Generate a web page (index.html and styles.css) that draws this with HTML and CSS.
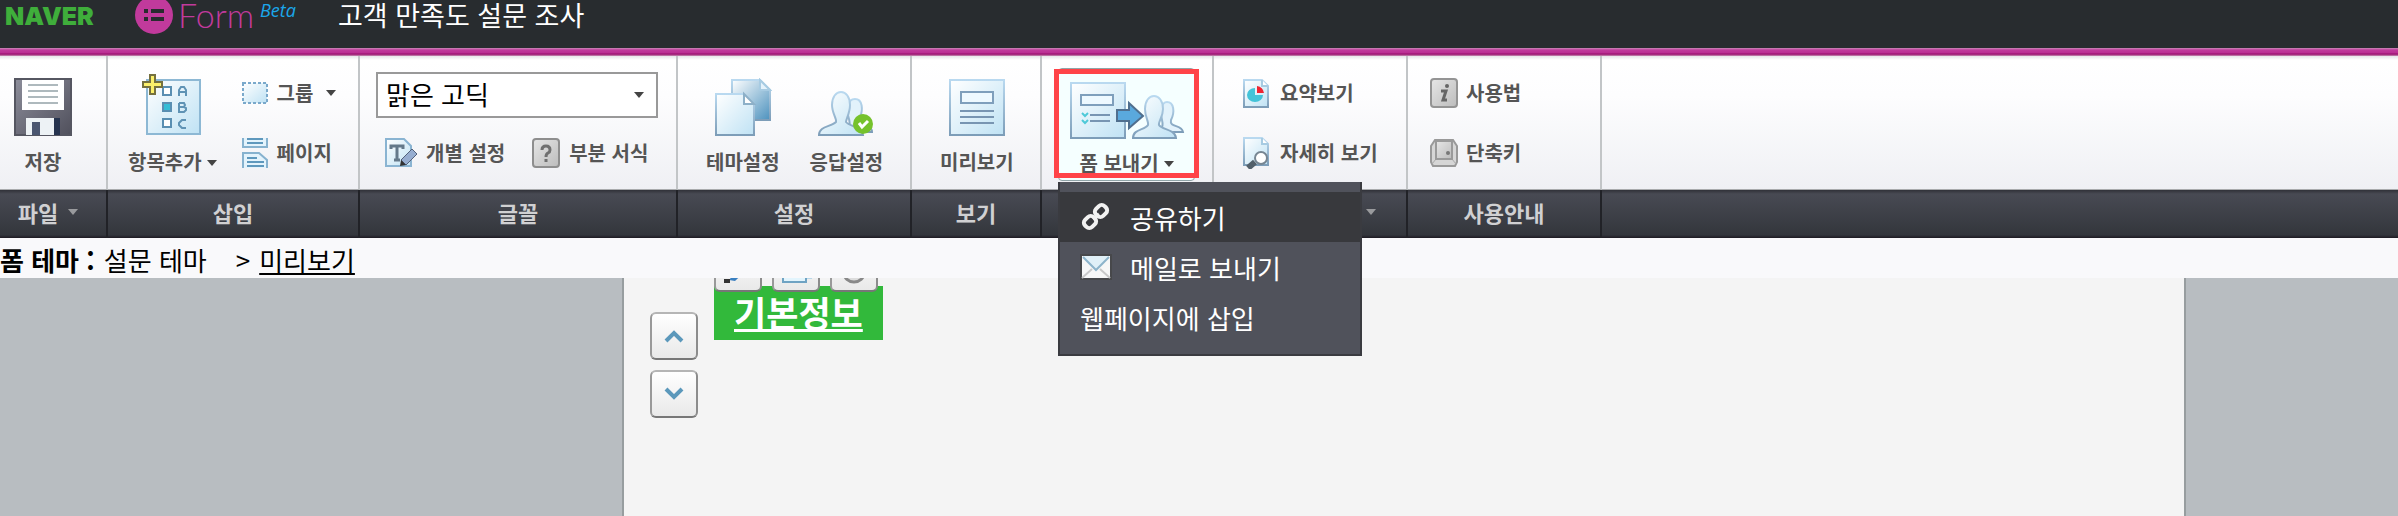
FILE: index.html
```html
<!DOCTYPE html>
<html lang="ko">
<head>
    <meta charset="UTF-8">
    <meta name="viewport" content="width=device-width, initial-scale=1.0">
    <title>고객 만족도 설문 조사</title>
    <link rel="stylesheet" href="styles.css">
</head>
<body>
    <svg class="defs" width="0" height="0">
        <defs>
            <linearGradient id="gSky" x1="0" y1="0" x2="1" y2="1">
                <stop offset="0" stop-color="#ffffff"/>
                <stop offset="1" stop-color="#bfe2f4"/>
            </linearGradient>
            <linearGradient id="gDeep" x1="0" y1="0" x2="1" y2="1">
                <stop offset="0" stop-color="#ffffff"/>
                <stop offset="1" stop-color="#4d92be"/>
            </linearGradient>
            <linearGradient id="gEdge" x1="0" y1="0" x2="0" y2="1">
                <stop offset="0" stop-color="#b9d9f0"/>
                <stop offset="1" stop-color="#7d9db8"/>
            </linearGradient>
            <linearGradient id="gSteel" x1="0" y1="0" x2="1" y2="1">
                <stop offset="0" stop-color="#8d8e9b"/>
                <stop offset="1" stop-color="#50505c"/>
            </linearGradient>
            <linearGradient id="gGray" x1="0" y1="0" x2="1" y2="1">
                <stop offset="0" stop-color="#e6e6e6"/>
                <stop offset="1" stop-color="#bcbcbc"/>
            </linearGradient>
        </defs>
    </svg>

    <header class="header">
        <span class="naver">NAVER</span>
        <svg class="logo" width="40" height="40" viewBox="0 0 40 40">
            <circle cx="20" cy="19" r="19" fill="#c13a9c"/>
            <path d="M10 15h4M10 23h4" stroke="#282c2f" stroke-width="4"/>
            <path d="M17 15h13M17 23h13" stroke="#282c2f" stroke-width="4"/>
        </svg>
        <span class="form">Form</span>
        <span class="beta">Beta</span>
        <h1 class="title">고객 만족도 설문 조사</h1>
    </header>

    <div class="ribbon">
        <section class="group file">
            <div class="tools">
                <button type="button" class="tool">
                    <svg width="58" height="58" viewBox="0 0 58 58">
                        <path d="M1 1h56v56H1z" fill="url(#gSteel)" stroke="#555661" stroke-width="2"/>
                        <path d="M8 2h42v30H8z" fill="#fff"/>
                        <path d="M14 7h30M14 13h30M14 19h30M14 25h30" stroke="#aeb9bd" stroke-width="2"/>
                        <path d="M12 40h28v17H12z" fill="#edf2f5"/>
                        <path d="M18 44h8v13h-8z" fill="#4b5670"/>
                        <path d="M40 40h6v17h-6z" fill="#26344f"/>
                    </svg>
                    <span>저장</span>
                </button>
            </div>
            <button type="button" class="name">파일 <i class="arrow"></i></button>
        </section>

        <section class="group insert">
            <div class="tools">
                <button type="button" class="tool">
                    <svg width="60" height="62" viewBox="0 0 60 62">
                        <path d="M5 6h53v54H5z" fill="url(#gSky)" stroke="#8db8d4" stroke-width="2"/>
                        <path d="M21 13h8v8h-8zM21 45h8v8h-8z" fill="#fff" stroke="#5a8fb2" stroke-width="2"/>
                        <path d="M21 29h8v8h-8z" fill="#35bdd6" stroke="#5a8fb2" stroke-width="2"/>
                        <g fill="none" stroke="#5f93b5" stroke-width="2">
                            <path d="M37 22v-6l2-3h3l2 3v6M37 18h7"/>
                            <path d="M37 29v9h5l2-2v-2l-2-1h-5M37 29h5l1 2-1 2"/>
                            <path d="M44 46h-4l-3 3v2l3 3h4"/>
                        </g>
                        <path d="M8 1h5v7h7v5h-7v7H8v-7H1V8h7z" fill="#fbf06a" stroke="#75713f" stroke-width="2"/>
                    </svg>
                    <span>항목추가<i class="arrow"></i></span>
                </button>
                <div class="stack">
                    <button type="button" class="item">
                        <svg width="28" height="30" viewBox="0 0 28 30">
                            <path d="M2 5h24v20H2z" fill="url(#gSky)" stroke="#7aa9cb" stroke-width="2" stroke-dasharray="3 2"/>
                        </svg>
                        <span>그룹</span><i class="arrow far"></i>
                    </button>
                    <button type="button" class="item">
                        <svg width="28" height="32" viewBox="0 0 28 32">
                            <path d="M2 1v9h24V1M2 31V16h16l8 7v8" fill="#e3f3fc" stroke="#86b2cf" stroke-width="2"/>
                            <path d="M6 2h16M6 6h16M6 21h10M6 25h17M6 29h17" stroke="#5e98bd" stroke-width="2"/>
                        </svg>
                        <span>페이지</span>
                    </button>
                </div>
            </div>
            <div class="name">삽입</div>
        </section>

        <section class="group font">
            <div class="tools">
                <div class="combo">
                    <select class="family" aria-label="글꼴">
                        <option>맑은 고딕</option>
                    </select>
                    <i class="arrow"></i>
                </div>
                <div class="row">
                    <button type="button" class="item">
                        <svg width="34" height="30" viewBox="0 0 34 30">
                            <path d="M2 1h18l7 7v20H2z" fill="url(#gSky)" stroke="#8ab4d2" stroke-width="2"/>
                            <path d="M7 11V8h12v3M13 8v14M10 22h6" fill="none" stroke="#64798a" stroke-width="3"/>
                            <path d="M17 22 28 11l5 5-11 11z" fill="#96add0" stroke="#53617a"/>
                            <path d="m17 22 5 5-6 1z" fill="#333"/>
                        </svg>
                        <span>개별 설정</span>
                    </button>
                    <button type="button" class="item">
                        <svg width="30" height="30" viewBox="0 0 30 30">
                            <rect x="2" y="1" width="26" height="28" rx="3" fill="url(#gGray)" stroke="#8e8e8e" stroke-width="2"/>
                            <path d="M11 12q0-4 4-4t4 4q0 2-2 3t-2 4M15 21v3" fill="none" stroke="#707070" stroke-width="3"/>
                        </svg>
                        <span>부분 서식</span>
                    </button>
                </div>
            </div>
            <div class="name">글꼴</div>
        </section>

        <section class="group setting">
            <div class="tools">
                <button type="button" class="tool">
                    <svg width="58" height="58" viewBox="0 0 58 58">
                        <path d="M18 2h28l10 10v30H18z" fill="url(#gDeep)" stroke="url(#gEdge)" stroke-width="2"/>
                        <path d="M46 2v10h10z" fill="#e4f2fb" stroke="#a7cbe2" stroke-width="2"/>
                        <path d="M2 16h28l10 10v31H2z" fill="url(#gSky)" stroke="url(#gEdge)" stroke-width="2"/>
                        <path d="M30 16v10h10z" fill="#fff" stroke="#8db0c8" stroke-width="2"/>
                    </svg>
                    <span>테마설정</span>
                </button>
                <button type="button" class="tool">
                    <svg width="58" height="58" viewBox="0 0 58 58">
                        <path d="M32 54c2-6 1-8 0-13-3-9-2-20 6-20 8 0 8 11 5 19 0 6 12 6 12 14z" fill="#e2f2fb" stroke="url(#gEdge)" stroke-width="2"/>
                        <path d="M2 57c0-9 12-8 17-13 1-3-4-9-4-17 0-8 4-13 9-13s9 5 9 13c0 8-4 14-4 17 4 5 16 4 17 13z" fill="url(#gSky)" stroke="url(#gEdge)" stroke-width="2"/>
                        <circle cx="46" cy="46" r="10" fill="#76c22c"/>
                        <path d="m42 45 3 4 6-6" fill="none" stroke="#fff" stroke-width="3"/>
                    </svg>
                    <span>응답설정</span>
                </button>
            </div>
            <div class="name">설정</div>
        </section>

        <section class="group view">
            <div class="tools">
                <button type="button" class="tool">
                    <svg width="58" height="58" viewBox="0 0 58 58">
                        <path d="M2 2h54v55H2z" fill="url(#gSky)" stroke="url(#gEdge)" stroke-width="2"/>
                        <path d="M13 14h32v11H13z" fill="#eef9ff" stroke="#7f9fbc" stroke-width="2"/>
                        <path d="M12 33h34M12 39h34M12 45h34" stroke="#7895b2" stroke-width="2"/>
                    </svg>
                    <span>미리보기</span>
                </button>
            </div>
            <div class="name">보기</div>
        </section>

        <section class="group send">
            <div class="tools">
                <button type="button" class="tool active" aria-haspopup="true" aria-expanded="true">
                    <svg width="116" height="58" viewBox="0 0 116 58">
                        <path d="M2 2h54v55H2z" fill="url(#gSky)" stroke="url(#gEdge)" stroke-width="2"/>
                        <path d="M12 14h32v10H12z" fill="#eef9ff" stroke="#7f9fbc" stroke-width="2"/>
                        <path d="M21 34h20M21 40h20" stroke="#7895b2" stroke-width="2"/>
                        <path d="m13 32 3 3 3-3M13 39l3 3 3-3" fill="none" stroke="#4fc9d8" stroke-width="2"/>
                        <path d="M91 51c3-6 3-8 2-12-2-8-1-18 5-18 7 0 8 10 4 18-2 8 11 4 12 12z" fill="#e2f2fb" stroke="url(#gEdge)" stroke-width="2"/>
                        <path d="M64 57c0-9 12-8 15-13 1-3-3-8-3-16 0-8 4-13 9-13s9 5 9 13c0 8-5 13-4 16 3 5 16 4 17 13z" fill="url(#gSky)" stroke="url(#gEdge)" stroke-width="2"/>
                        <path d="M48 29h12v-7l14 13-14 12v-7H48z" fill="#5aa9dd" stroke="#506f8e" stroke-width="2"/>
                    </svg>
                    <span>폼 보내기<i class="arrow"></i></span>
                </button>
                <div class="menu">
                    <button type="button" class="entry selected">
                        <svg width="32" height="32" viewBox="0 0 32 32" fill="none" stroke="#f2f2f2" stroke-width="4">
                            <rect x="-6" y="-5" width="12" height="10" rx="4" transform="translate(10 21) rotate(-45)"/>
                            <rect x="-6" y="-5" width="12" height="10" rx="4" transform="translate(21 10) rotate(-45)"/>
                            <path d="m13 18 6-5" stroke-width="3"/>
                        </svg>
                        공유하기
                    </button>
                    <button type="button" class="entry">
                        <svg width="32" height="32" viewBox="0 0 32 32">
                            <path d="M1 4h30v24H1z" fill="#f7f7f7" stroke="#47484b" stroke-width="2"/>
                            <path d="m2 27 10-9M30 27l-10-9" stroke="#c9c9c9" stroke-width="2"/>
                            <path d="M3 5h26L16 19z" fill="#e0f0f8"/>
                            <path d="m3 6 13 13L29 6" fill="none" stroke="#8db4cb" stroke-width="2"/>
                        </svg>
                        메일로 보내기
                    </button>
                    <button type="button" class="entry">웹페이지에 삽입</button>
                </div>
            </div>
            <div class="name"></div>
        </section>

        <section class="group result">
            <div class="tools">
                <div class="stack">
                    <button type="button" class="item">
                        <svg width="28" height="30" viewBox="0 0 28 30">
                            <path d="M2 2h18l6 6v21H2z" fill="url(#gSky)" stroke="url(#gEdge)" stroke-width="2"/>
                            <path d="M20 2v6h6" fill="#fff" stroke="#a7cbe2" stroke-width="2"/>
                            <path d="M13 10v7h8a8 7 0 1 1-8-7z" fill="#43c3d8"/>
                            <path d="M15 8v7h7q-1-6-7-7z" fill="#ee2431"/>
                        </svg>
                        <span>요약보기</span>
                    </button>
                    <button type="button" class="item">
                        <svg width="28" height="32" viewBox="0 0 28 32">
                            <path d="M2 1h18l6 6v21H2z" fill="url(#gSky)" stroke="url(#gEdge)" stroke-width="2"/>
                            <path d="M20 1v6h6" fill="#fff" stroke="#a7cbe2" stroke-width="2"/>
                            <path d="m13 25-7 6" stroke="#53606a" stroke-width="6"/>
                            <circle cx="19" cy="21" r="6" fill="#fff" stroke="#778692" stroke-width="2"/>
                        </svg>
                        <span>자세히 보기</span>
                    </button>
                </div>
            </div>
            <button type="button" class="name" aria-haspopup="true"><i class="arrow"></i></button>
        </section>

        <section class="group help">
            <div class="tools">
                <div class="stack">
                    <button type="button" class="item">
                        <svg width="28" height="30" viewBox="0 0 28 30">
                            <rect x="1" y="1" width="26" height="28" rx="3" fill="url(#gGray)" stroke="#949494" stroke-width="2"/>
                            <path d="M11 13h5l-3 9h4" fill="none" stroke="#666" stroke-width="3"/>
                            <circle cx="17" cy="8" r="2" fill="#666"/>
                        </svg>
                        <span>사용법</span>
                    </button>
                    <button type="button" class="item">
                        <svg width="28" height="28" viewBox="0 0 28 28">
                            <path d="M5 1h18l4 6v16l-2 4H3l-2-4V7z" fill="#d6d6d6" stroke="#999" stroke-width="2"/>
                            <path d="m6 20-4 5M22 20l4 5" stroke="#aaa"/>
                            <path d="M6 2h16v18H6z" fill="url(#gGray)" stroke="#9a9a9a" stroke-width="2"/>
                            <circle cx="18" cy="14" r="2" fill="#777"/>
                        </svg>
                        <span>단축키</span>
                    </button>
                </div>
            </div>
            <div class="name">사용안내</div>
        </section>

        <div class="rest">
            <div class="tools"></div>
            <div class="name"></div>
        </div>
    </div>

    <nav class="path">
        <b>폼 테마 :</b> <span>설문 테마</span> <span class="gt">&gt;</span> <a href="#">미리보기</a>
    </nav>

    <main class="workspace">
        <div class="page">
            <div class="move">
                <button type="button" class="square" aria-label="위로">
                    <svg width="20" height="14" viewBox="0 0 20 14"><path d="m2 12 8-8 8 8" fill="none" stroke="#5b98bb" stroke-width="4"/></svg>
                </button>
                <button type="button" class="square" aria-label="아래로">
                    <svg width="20" height="14" viewBox="0 0 20 14"><path d="m2 2 8 8 8-8" fill="none" stroke="#5b98bb" stroke-width="4"/></svg>
                </button>
            </div>
            <div class="block">
                <h2 class="heading">기본정보</h2>
                <div class="edit">
                    <button type="button" class="square" aria-label="수정">
                        <svg width="32" height="32" viewBox="0 -7 32 32">
                            <path d="M7 21 22 4l5 5-14 13z" fill="#3a7fc0"/>
                            <path d="M2 20h6v4H2z" fill="#333"/>
                        </svg>
                    </button>
                    <button type="button" class="square" aria-label="복사">
                        <svg width="32" height="32" viewBox="0 -7 32 32">
                            <path d="M10 4h22v16H10z" fill="#b9d7e8"/>
                            <path d="M3 8h23v15H3z" fill="#e3f5fd" stroke="#6fa3c3" stroke-width="2"/>
                        </svg>
                    </button>
                    <button type="button" class="square" aria-label="삭제">
                        <svg width="32" height="32" viewBox="0 -7 32 32">
                            <ellipse cx="16" cy="14" rx="10" ry="9" fill="#ddd" stroke="#888" stroke-width="3"/>
                        </svg>
                    </button>
                </div>
            </div>
        </div>
    </main>
</body>
</html>
```
FILE: styles.css
```css
* {
    box-sizing: border-box;
}
body {
    margin: 0;
    font-family: "Noto Sans CJK KR", sans-serif;
    font-size: 26px;
    color: #000;
    background-color: #b8bdc1;
    min-height: 100vh;
    display: flex;
    flex-direction: column;
}
button {
    font-family: inherit;
    border: none;
    padding: 0;
    background: none;
    cursor: pointer;
}
svg {
    display: block;
    flex: none;
}
.defs {
    position: absolute;
}

/* header */
.header {
    display: flex;
    height: 56px;
    padding-left: 5px;
    background: linear-gradient(#c98ab7, #c13a9c 2px, #b92d92 5px, #980b6b 6px, #c890b5) no-repeat 0 48px / 100% 8px, #282c2f;
    white-space: nowrap;
}
.naver {
    width: 129px;
    font-family: Inter, sans-serif;
    font-size: 25px;
    font-weight: 900;
    line-height: 32px;
    color: #3fae3b;
}
.logo {
    margin-top: -4px;
}
.form {
    margin-left: 4px;
    width: 82px;
    font-family: Lato, sans-serif;
    font-size: 34px;
    font-weight: 300;
    line-height: 30px;
    color: #c13a9c;
}
.beta {
    width: 78px;
    font-family: "Open Sans", sans-serif;
    font-size: 18px;
    font-style: italic;
    line-height: 20px;
    color: #1ba7ea;
}
.title {
    margin: 0;
    font-size: 27px;
    font-weight: 400;
    line-height: 30px;
    color: #fff;
}

/* ribbon */
.ribbon {
    display: flex;
}
.group {
    display: flex;
    flex-direction: column;
    flex: none;
}
.file {
    width: 108px;
}
.insert {
    width: 252px;
}
.font {
    width: 318px;
}
.setting {
    width: 234px;
}
.view {
    width: 130px;
}
.send {
    width: 172px;
}
.result,
.help {
    width: 194px;
}
.rest {
    flex: 1;
}
.tools {
    position: relative;
    display: flex;
    align-items: flex-start;
    height: 134px;
    padding-top: 22px;
    background: linear-gradient(#e6e6e8, #fff 4px, #fdfdfe 30%, #eff0f4);
    border-right: 2px solid #c2c5c7;
    border-bottom: 1px solid #a9abad;
}
.name {
    display: flex;
    align-items: center;
    justify-content: center;
    gap: 10px;
    width: 100%;
    height: 48px;
    padding: 0 0 4px;
    background: linear-gradient(#303138, #484a53 4px, #33363c 45px, #1d1a22);
    border-right: 2px solid #212227;
    font-size: 22px;
    font-weight: 700;
    line-height: 32px;
    color: #d0d0d2;
}
.rest .tools,
.rest .name {
    border-right: none;
}
.arrow {
    display: inline-block;
    border: 5px solid transparent;
    border-top: 6px solid #444;
    border-bottom: none;
}
.name .arrow {
    border-top-color: #999a9d;
}
.file .name {
    padding-right: 10px;
}
.result .name {
    justify-content: flex-end;
    padding-right: 30px;
}
.tool {
    display: flex;
    flex-direction: column;
    align-items: center;
    justify-content: flex-end;
    height: 98px;
    gap: 12px;
    font-size: 20px;
    font-weight: 700;
    line-height: 28px;
    color: #555;
    white-space: nowrap;
}
.tool .arrow {
    margin-left: 5px;
    vertical-align: 4px;
}
.item {
    display: flex;
    align-items: center;
    gap: 8px;
    height: 30px;
    font-size: 20px;
    font-weight: 700;
    line-height: 28px;
    color: #555;
    white-space: nowrap;
}
.item .far {
    margin-left: 5px;
}
.stack {
    display: flex;
    flex-direction: column;
    gap: 30px;
}
.row {
    display: flex;
    gap: 26px;
    padding-left: 8px;
}
.file .tools {
    padding-left: 14px;
}
.insert .tools {
    padding-left: 20px;
    gap: 24px;
}
.font .tools {
    flex-direction: column;
    gap: 20px;
    padding: 16px 16px 0;
}
.combo {
    position: relative;
    width: 282px;
}
.combo .arrow {
    position: absolute;
    top: 20px;
    right: 14px;
    pointer-events: none;
}
.family {
    display: block;
    width: 100%;
    height: 46px;
    padding: 0 12px 4px 8px;
    appearance: none;
    border: 2px solid #999;
    border-radius: 0;
    background-color: #fff;
    font-family: inherit;
    font-size: 26px;
    color: #000;
}
.setting .tools {
    padding-left: 28px;
    gap: 30px;
}
.view .tools {
    padding-left: 28px;
}
.send .tools {
    padding: 12px 0 0 16px;
}
.result .tools {
    padding-left: 28px;
}
.result .item {
    gap: 10px;
}
.help .tools {
    padding-left: 22px;
}
.active {
    position: relative;
    width: 137px;
    height: 113px;
    gap: 10px;
    padding-bottom: 3px;
    background-color: #f5ffff;
    border: 1px solid #90a4a8;
    border-radius: 4px;
}
.active::after {
    content: "";
    position: absolute;
    top: 0;
    left: -5px;
    right: -5px;
    bottom: 2px;
    border: 5px solid #ff4348;
}
.menu {
    position: absolute;
    z-index: 2;
    top: 126px;
    left: 16px;
    width: 304px;
    padding: 10px 0 12px;
    background-color: #50525b;
    border: 2px solid #3a3b40;
    border-top: none;
}
.entry {
    display: flex;
    align-items: center;
    gap: 18px;
    width: 100%;
    height: 50px;
    padding-left: 20px;
    font-size: 26px;
    color: #fff;
}
.selected {
    background-color: #38393d;
}

/* path */
.path {
    display: flex;
    gap: 9px;
    height: 40px;
    background-color: #f9f9fb;
    line-height: 44px;
    white-space: nowrap;
}
.path .gt {
    margin-left: 20px;
}
.path a {
    color: #000;
}

/* workspace */
.workspace {
    display: flex;
    flex: 1;
    padding: 0 212px 0 622px;
}
.page {
    display: flex;
    flex: 1;
    align-items: flex-start;
    gap: 16px;
    padding-left: 26px;
    background-color: #f4f4f4;
    border: solid #979d9f;
    border-width: 0 2px;
}
.move {
    display: flex;
    flex-direction: column;
    gap: 10px;
    padding-top: 34px;
}
.square {
    display: flex;
    align-items: center;
    justify-content: center;
    width: 48px;
    height: 48px;
    background: linear-gradient(#fff, #e9e9e9);
    border: 2px solid #999;
    border-color: #b5b5b5 #8c8c8c #777 #999;
    border-radius: 6px;
}
.block {
    position: relative;
    padding-top: 8px;
    overflow: hidden;
}
.heading {
    margin: 0;
    padding: 0 20px 2px;
    background-color: #32b93b;
    font-size: 35px;
    line-height: 52px;
    color: #fff;
    text-decoration: underline;
}
.edit {
    position: absolute;
    top: -34px;
    left: 0;
    display: flex;
    gap: 10px;
}
```
